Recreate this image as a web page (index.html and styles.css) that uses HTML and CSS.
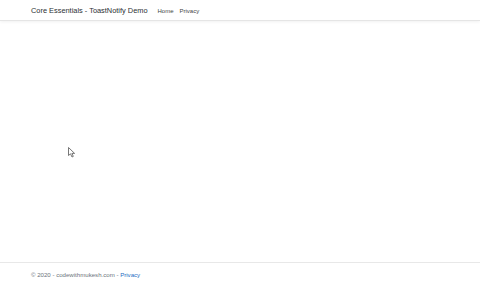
FILE: index.html
```html
<!DOCTYPE html>
<html>
<head>
<meta charset="utf-8">
<link rel="stylesheet" href="styles.css">
</head>
<body>
<header class="navbar">
  <a class="brand" href="#">Core Essentials - ToastNotify Demo</a>
  <nav class="nav">
    <a href="#">Home</a>
    <a href="#">Privacy</a>
  </nav>
</header>
<main class="main"></main>
<footer class="footer">
  <span>&copy; 2020 - codewithmukesh.com - <a href="#">Privacy</a></span>
</footer>
<svg class="cursor" width="8" height="11" viewBox="0 0 8 11">
  <path d="M0.5 0.5 L0.5 8.5 L2.5 6.8 L4 10 L5.3 9.4 L3.9 6.4 L6.6 6.4 Z" fill="#fff" stroke="#555" stroke-width="0.8" stroke-linejoin="round"/>
</svg>
</body>
</html>
```
FILE: styles.css
```css
html, body { margin: 0; padding: 0; }
body {
  width: 480px;
  height: 285px;
  background: #fff;
  font-family: "Liberation Sans", Arial, sans-serif;
  color: #212529;
  display: flex;
  flex-direction: column;
  position: relative;
  overflow: hidden;
}
a { text-decoration: none; }
.navbar {
  height: 20px;
  display: flex;
  align-items: center;
  padding: 0 31px;
  border-bottom: 1px solid #e5e5e5;
  box-shadow: 0 1px 3px rgba(0,0,0,0.06);
}
.brand {
  font-size: 7.4px;
  color: #2b2f33;
  margin-right: 10px;
  margin-top: 1px;
}
.nav { display: flex; gap: 6px; }
.nav a { font-size: 6px; color: #444; margin-top: 1px; }
.main { flex: 1; }
.footer {
  height: 22px;
  border-top: 1px solid #e8e8e8;
  display: flex;
  align-items: center;
  padding: 0 31px;
  font-size: 6.1px;
  color: #6c757d;
}
.footer a { color: #1b6ec2; }
.cursor { position: absolute; left: 68px; top: 147px; }
```
